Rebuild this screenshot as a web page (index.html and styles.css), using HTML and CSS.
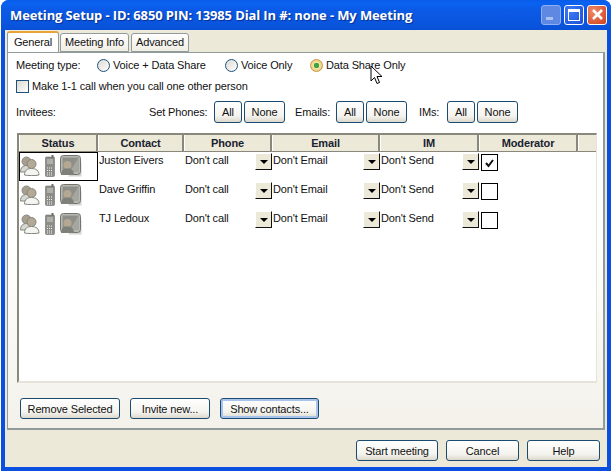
FILE: index.html
```html
<!DOCTYPE html>
<html lang="en">
<head>
    <meta charset="UTF-8">
    <title>Meeting Setup</title>
    <link rel="stylesheet" href="styles.css">
</head>
<body>
    <svg class="defs" width="0" height="0">
        <symbol id="ico-people" viewBox="0 0 20 20">
            <circle cx="6.500" cy="5.500" r="4.500" fill="#a89f8d" stroke="#8a8a84" />
            <path d="M0.500 16c0-4.500 2.500-6.500 6-6.500s6 2 6 6.500z" fill="#d8d8d3" stroke="#85857f" />
            <circle cx="11.500" cy="8" r="4.500" fill="#b3a994" stroke="#85837c" />
            <path d="M4.500 19c0-4.500 2.500-6.500 7-6.500s7.500 2 7.500 6.500c-3 .8-11.500.8-14.500 0z" fill="#f4f4f0" stroke="#85857f" />
        </symbol>
        <symbol id="ico-phone" viewBox="0 0 10 22">
            <rect x="0.500" y="2" width="9" height="19.500" rx="1" fill="#8c8c88" stroke="#6e6e6a" stroke-width="0.600" />
            <rect x="6.500" y="0" width="2" height="3" fill="#6e6e6a" />
            <rect x="2" y="4" width="6" height="5" fill="#b0b0aa" />
            <path d="M2 13h6M2 15.500h6M2 18h6M2 20h6" stroke="#f2f2f2" stroke-dasharray="1 1" />
        </symbol>
        <symbol id="ico-screen" viewBox="0 0 22 22">
            <path d="M21.500 7v14.500H8z" fill="#d4d4d1" />
            <rect x="0.500" y="0.500" width="20" height="19" rx="3" fill="#b8b8b2" stroke="#74746f" />
            <rect x="2.500" y="2.500" width="16" height="14" fill="#8f8f89" />
            <path d="M18.500 2.500v14H10z" fill="#a6a6a1" />
            <circle cx="7.500" cy="10" r="4" fill="#b5a893" />
            <path d="M1 20c0-4.500 2.500-6.500 6.500-6.500s6.500 2 6.500 6.500z" fill="#80807a" />
        </symbol>
    </svg>

    <div class="window">
        <div class="titlebar">
            <span class="title">Meeting Setup - ID: 6850 PIN: 13985 Dial In #: none - My Meeting</span>
            <div class="caption-btns">
                <div class="cap cap-min"><span></span></div>
                <div class="cap cap-max"><span></span></div>
                <div class="cap cap-close">
                    <svg width="13" height="13" viewBox="0 0 13 13"><path d="M2 2l9 9M11 2l-9 9" stroke="#fff" stroke-width="2.600" /></svg>
                </div>
            </div>
        </div>

        <div class="client">
            <div class="tabs">
                <div class="tab tab-active">General</div>
                <div class="tab tab-info">Meeting Info</div>
                <div class="tab tab-adv">Advanced</div>
            </div>

            <div class="panel">
                <div class="type-row">
                    <span class="type-label">Meeting type:</span>
                    <span class="radio radio-a"></span><span class="type-a">Voice + Data Share</span>
                    <span class="radio radio-b"></span><span class="type-b">Voice Only</span>
                    <span class="radio radio-on"></span><span>Data Share Only</span>
                </div>
                <div class="call-row">
                    <span class="check"></span>
                    <span>Make 1-1 call when you call one other person</span>
                </div>
                <div class="invite-row">
                    <span class="invitees">Invitees:</span>
                    <span class="set-phones">Set Phones:</span>
                    <button class="btn btn-all">All</button>
                    <button class="btn btn-none">None</button>
                    <span class="set-emails">Emails:</span>
                    <button class="btn btn-all">All</button>
                    <button class="btn btn-none">None</button>
                    <span class="set-ims">IMs:</span>
                    <button class="btn btn-all">All</button>
                    <button class="btn btn-none">None</button>
                </div>

                <div class="table">
                    <div class="thead">
                        <div class="th">Status</div>
                        <div class="th">Contact</div>
                        <div class="th">Phone</div>
                        <div class="th">Email</div>
                        <div class="th">IM</div>
                        <div class="th">Moderator</div>
                        <div class="th th-end"></div>
                    </div>
                    <div class="tr">
                        <div class="td status status-sel">
                            <svg class="i-people"><use href="#ico-people" /></svg>
                            <svg class="i-phone"><use href="#ico-phone" /></svg>
                            <svg class="i-screen"><use href="#ico-screen" /></svg>
                        </div>
                        <div class="td">Juston Eivers</div>
                        <div class="td combo">Don't call<span class="drop"></span></div>
                        <div class="td combo">Don't Email<span class="drop"></span></div>
                        <div class="td combo">Don't Send<span class="drop"></span></div>
                        <div class="td mod">
                            <span class="mod-box">
                                <svg width="11" height="10" viewBox="0 0 11 10"><path d="M2 5l2.500 3 4.500-6" fill="none" stroke="#111" stroke-width="2" /></svg>
                            </span>
                        </div>
                    </div>
                    <div class="tr">
                        <div class="td status">
                            <svg class="i-people"><use href="#ico-people" /></svg>
                            <svg class="i-phone"><use href="#ico-phone" /></svg>
                            <svg class="i-screen"><use href="#ico-screen" /></svg>
                        </div>
                        <div class="td">Dave Griffin</div>
                        <div class="td combo">Don't call<span class="drop"></span></div>
                        <div class="td combo">Don't Email<span class="drop"></span></div>
                        <div class="td combo">Don't Send<span class="drop"></span></div>
                        <div class="td mod"><span class="mod-box"></span></div>
                    </div>
                    <div class="tr">
                        <div class="td status">
                            <svg class="i-people"><use href="#ico-people" /></svg>
                            <svg class="i-phone"><use href="#ico-phone" /></svg>
                            <svg class="i-screen"><use href="#ico-screen" /></svg>
                        </div>
                        <div class="td">TJ Ledoux</div>
                        <div class="td combo">Don't call<span class="drop"></span></div>
                        <div class="td combo">Don't Email<span class="drop"></span></div>
                        <div class="td combo">Don't Send<span class="drop"></span></div>
                        <div class="td mod"><span class="mod-box"></span></div>
                    </div>
                </div>

                <div class="panel-btns">
                    <button class="btn btn-remove">Remove Selected</button>
                    <button class="btn btn-invite">Invite new...</button>
                    <button class="btn btn-show">Show contacts...</button>
                </div>
            </div>

            <div class="footer">
                <button class="btn btn-start">Start meeting</button>
                <button class="btn btn-foot">Cancel</button>
                <button class="btn btn-foot">Help</button>
            </div>
        </div>
    </div>

    <svg class="cursor" width="13" height="20" viewBox="0 0 13 20">
        <path d="M1 1v15l3.500-3.500 2.500 6 2.500-1-2.500-6h5z" fill="#fff" stroke="#000" />
    </svg>
</body>
</html>
```

FILE: styles.css
```css
* {
    box-sizing: border-box;
}
html,
body {
    margin: 0;
    padding: 0;
    width: 613px;
    height: 471px;
    overflow: hidden;
    background: #fff;
}
body {
    font-family: "Liberation Sans", Arial, sans-serif;
    font-size: 11px;
    letter-spacing: -0.13px;
    color: #111;
    position: relative;
}
.defs {
    position: absolute;
}

/* window frame */
.window {
    width: 610px;
    height: 471px;
    margin-left: 1px;
    padding: 0 4px 4px 4px;
    background: #0a4fe0;
    border-radius: 8px 8px 0 0;
    display: flex;
    flex-direction: column;
}
.titlebar {
    height: 30px;
    margin: 0 -4px;
    padding: 0 4px 0 9px;
    background: linear-gradient(#0a5be8 0, #0a62f0 3px, #0b5ae6 10px, #0a55de 24px, #0850d6 30px);
    border-radius: 8px 8px 0 0;
    display: flex;
    align-items: center;
    justify-content: space-between;
}
.title {
    font-family: "Open Sans", "DejaVu Sans", sans-serif;
    font-weight: 700;
    font-size: 13px;
    letter-spacing: -0.12px;
    color: #fff;
    text-shadow: 1px 1px 1px #0a2f90;
    white-space: nowrap;
}
.caption-btns {
    display: flex;
    gap: 3px;
    margin-top: -1px;
}
.cap {
    width: 20px;
    height: 20px;
    border: 1px solid #fff;
    border-radius: 3px;
    display: flex;
    align-items: center;
    justify-content: center;
    background: radial-gradient(circle at 30% 30%, #3f7cf5, #1a4fd8);
}
.cap-min {
    border-color: #8fb0ee;
    background: #5f88e2;
    align-items: flex-end;
    justify-content: flex-start;
    padding: 0 0 4px 4px;
}
.cap-min span {
    width: 7px;
    height: 3px;
    background: #a9c2f2;
}
.cap-max span {
    width: 12px;
    height: 12px;
    border: 1px solid #fff;
    border-top-width: 3px;
}
.cap-close {
    background: radial-gradient(circle at 30% 30%, #ee8a68, #d0401c);
}

/* client area */
.client {
    flex: 1;
    background: #ece9d8;
    display: flex;
    flex-direction: column;
    padding: 2px 2px 0 2px;
}
.tabs {
    display: flex;
    height: 20px;
    gap: 1px;
    position: relative;
    z-index: 1;
}
.tab {
    height: 19px;
    margin-top: 1px;
    padding-bottom: 2px;
    border: 1px solid #919b9c;
    border-radius: 3px 3px 0 0;
    background: linear-gradient(#fff, #f0eee4);
    display: flex;
    align-items: center;
    justify-content: center;
}
.tab-active {
    width: 52px;
    height: 21px;
    margin-top: -1px;
    background: #fff;
    border-top: 2px solid #e8a33a;
    border-bottom: none;
}
.tab-info {
    width: 69px;
}
.tab-adv {
    width: 58px;
    margin-left: 1px;
}

.panel {
    width: 598px;
    height: 378px;
    border: 1px solid #919b9c;
    border-bottom-width: 2px;
    border-right-width: 2px;
    background: linear-gradient(#fff 0, #fff 50%, #f3f1ea 100%);
    padding: 0 8px;
    display: flex;
    flex-direction: column;
}
.type-row {
    height: 24px;
    display: flex;
    align-items: center;
}
.type-label {
    width: 81px;
}
.radio {
    width: 13px;
    height: 13px;
    border: 1px solid #1c5180;
    border-radius: 50%;
    background: linear-gradient(135deg, #dcd9cf, #fff);
    margin-right: 3px;
}
.radio-on {
    border-color: #c9973f;
    background: radial-gradient(circle, #3fa63f 0, #3fa63f 2.500px, #f4e3a8 3px, #e6b85c 100%);
}
.type-a {
    width: 112px;
}
.type-b {
    width: 69px;
}
.call-row {
    height: 18px;
    display: flex;
    align-items: center;
    gap: 3px;
}
.check {
    width: 13px;
    height: 13px;
    border: 1px solid #1c5180;
    background: linear-gradient(135deg, #dcd9cf, #fff);
}
.invite-row {
    height: 22px;
    margin-top: 6px;
    display: flex;
    align-items: center;
}
.invitees {
    width: 133px;
}
.set-phones {
    width: 65px;
}
.set-emails {
    width: 41px;
    margin-left: 10px;
}
.set-ims {
    width: 28px;
    margin-left: 12px;
}

/* buttons */
.btn {
    font-family: inherit;
    font-size: 11px;
    letter-spacing: inherit;
    color: #111;
    padding: 0;
    border: 1px solid #1c4b72;
    border-radius: 3px;
    background: linear-gradient(#fff, #f4f3ee 70%, #dcd8cb);
}
.btn-all {
    width: 28px;
    height: 22px;
    margin-right: 2px;
}
.btn-none {
    width: 41px;
    height: 22px;
}

/* contact table */
.table {
    width: 580px;
    height: 250px;
    margin-top: 10px;
    margin-left: 1px;
    background: #fff;
    border-left: 2px solid #8a877c;
    border-top: 2px solid #8a877c;
    border-right: 1px solid #e5e3da;
    border-bottom: 2px solid #e5e3da;
}
.thead,
.tr {
    display: grid;
    grid-template-columns: 79px 86px 88px 108px 99px 99px 18px;
}
.thead {
    height: 17px;
    background: #ece9d8;
    border-bottom: 1px solid #8a877c;
}
.th {
    font-weight: 700;
    color: #1a2130;
    text-align: center;
    line-height: 16px;
    border-right: 2px solid #8a877c;
    border-left: 1px solid #fff;
}
.th-end {
    border-right: none;
}
.tr {
    height: 29px;
}
.td {
    padding: 0 0 0 1px;
    line-height: 16px;
    position: relative;
}
.status {
    display: flex;
    align-items: flex-start;
    padding: 3px 0 0 1px;
}
.status-sel {
    border: 1px solid #000;
    padding: 2px 0 0 0;
}
.i-people {
    width: 20px;
    height: 20px;
    margin-top: 1px;
}
.i-phone {
    width: 10px;
    height: 22px;
    margin-left: 5px;
}
.i-screen {
    width: 22px;
    height: 22px;
    margin-left: 5px;
}
.combo {
    display: flex;
    justify-content: space-between;
}
.drop {
    width: 17px;
    height: 17px;
    margin-top: 1px;
    background: #ece9d8;
    border: 1px solid;
    border-color: #fff #111 #111 #fff;
    display: flex;
    align-items: center;
    justify-content: center;
}
.drop::after {
    content: "";
    border-left: 4px solid transparent;
    border-right: 4px solid transparent;
    border-top: 4px solid #000;
}
.mod {
    padding: 2px 0 0 2px;
}
.mod-box {
    display: flex;
    align-items: center;
    justify-content: center;
    width: 17px;
    height: 17px;
    border: 1px solid #000;
    background: #fff;
}

.panel-btns {
    display: flex;
    margin-top: 15px;
    padding-left: 4px;
}
.panel-btns .btn {
    height: 21px;
}
.btn-remove {
    width: 100px;
    margin-right: 10px;
}
.btn-invite {
    width: 80px;
    margin-right: 10px;
}
.btn-show {
    width: 99px;
    box-shadow: inset 0 0 0 2px #a9c4ec;
}

.footer {
    display: flex;
    justify-content: flex-end;
    gap: 8px;
    padding: 10px 5px 0 0;
}
.footer .btn {
    height: 21px;
}
.btn-start {
    width: 82px;
}
.btn-foot {
    width: 73px;
}

/* mouse pointer lying over the dialog */
.cursor {
    position: absolute;
    left: 370px;
    top: 65px;
}
```
